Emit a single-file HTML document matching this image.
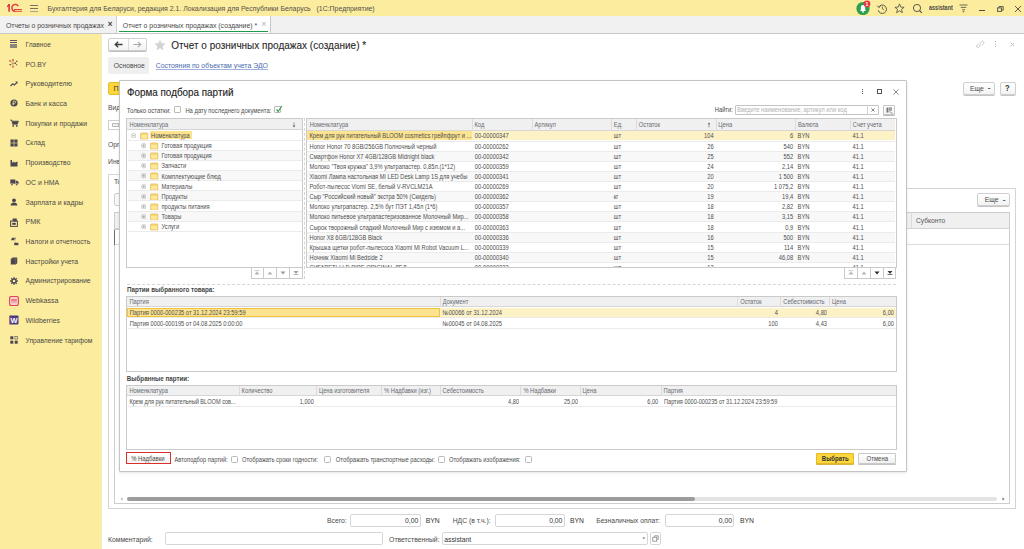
<!DOCTYPE html><html><head><meta charset="utf-8"><style>
html,body{margin:0;padding:0;}
body{width:1024px;height:549px;overflow:hidden;position:relative;background:#fff;font-family:"Liberation Sans",sans-serif;}
.t{position:absolute;white-space:nowrap;}
.r{position:absolute;box-sizing:border-box;}
</style></head><body>
<div class="r" style="left:0.00px;top:0.00px;width:1024.00px;height:16.45px;background:#fbec9e;"></div>
<svg class="r" style="left:0px;top:0px;width:24px;height:16px" viewBox="0 0 24 16"><rect x="8.3" y="4.2" width="1.6" height="7.5" fill="#e0323c"/><path d="M6.8 6.5 L8.4 4.2 L9.9 4.2 L9.9 5.3 L7.3 7.3 Z" fill="#e0323c"/><path d="M18.3 6.2 A3.4 3.4 0 1 0 15.2 11.2" fill="none" stroke="#e0323c" stroke-width="1.3"/><rect x="14" y="9" width="8" height="0.9" fill="#e0323c"/><rect x="14" y="10.8" width="8" height="0.9" fill="#e0323c"/></svg>
<div class="r" style="left:30.00px;top:4.90px;width:7.50px;height:1.00px;background:#7a7262;"></div>
<div class="r" style="left:30.00px;top:7.90px;width:7.50px;height:1.00px;background:#7a7262;"></div>
<div class="r" style="left:30.00px;top:10.50px;width:7.50px;height:1.00px;background:#aaa286;"></div>
<div class="t" style="top:4.40px;font-size:6.95px;line-height:10px;color:#55514a;transform:scaleY(1.12);left:47.50px;">Бухгалтерия для Беларуси, редакция 2.1. Локализация для Республики Беларусь&nbsp;&nbsp;&nbsp;(1С:Предприятие)</div>
<svg class="r" style="left:855px;top:0px;width:18px;height:16px" viewBox="0 0 18 16"><circle cx="8" cy="8.5" r="6.6" fill="#2e9e4f"/><path d="M5 11 L5.8 10 L5.8 7.5 A2.2 2.4 0 0 1 10.2 7.5 L10.2 10 L11 11 Z" fill="#fff"/><circle cx="8" cy="11.8" r="0.9" fill="#fff"/><circle cx="12" cy="3.8" r="3.4" fill="#e03a3e"/><text x="12" y="5.6" text-anchor="middle" font-family="Liberation Sans" font-weight="bold" font-size="5" fill="#fff">1</text></svg>
<svg class="r" style="left:876px;top:3px;width:12px;height:11px" viewBox="0 0 12 11"><path d="M2.6 4.2 A4.2 4.2 0 1 1 2.2 7.2" fill="none" stroke="#4d4a44" stroke-width="0.9"/><path d="M1.2 2.6 L2.8 4.6 L4.6 3.2" fill="none" stroke="#4d4a44" stroke-width="0.8"/><path d="M6.4 3.5 L6.4 5.8 L8 7" fill="none" stroke="#4d4a44" stroke-width="0.8"/></svg>
<svg class="r" style="left:894px;top:3px;width:11px;height:11px" viewBox="0 0 11 11"><path d="M5.5 0.9 L6.8 4.1 L10.1 4.3 L7.5 6.4 L8.4 9.7 L5.5 7.8 L2.6 9.7 L3.5 6.4 L0.9 4.3 L4.2 4.1 Z" fill="none" stroke="#4d4a44" stroke-width="0.8" stroke-linejoin="round"/></svg>
<svg class="r" style="left:912px;top:3px;width:11px;height:11px" viewBox="0 0 11 11"><circle cx="5" cy="5" r="3.6" fill="none" stroke="#4d4a44" stroke-width="0.9"/><path d="M7.6 7.6 L9.8 9.8" stroke="#4d4a44" stroke-width="1.1"/></svg>
<div class="t" style="top:3.40px;font-size:5.5px;line-height:10px;color:#4d4a44;transform:scaleY(1.2);font-weight:bold;left:929.00px;">assistant</div>
<svg class="r" style="left:959px;top:4px;width:9px;height:9px" viewBox="0 0 9 9"><path d="M0.5 1 H8.5 M1.8 3.4 H7.2 M3 5.8 H6" stroke="#4d4a44" stroke-width="0.8"/><path d="M3.3 7.2 L5.7 7.2 L4.5 8.6 Z" fill="#4d4a44"/></svg>
<div class="r" style="left:979.00px;top:10.00px;width:5.50px;height:1.00px;background:#4d4a44;"></div>
<svg class="r" style="left:997px;top:5.5px;width:7px;height:6px" viewBox="0 0 7 6"><rect x="0.6" y="1.9" width="3.8" height="3.5" fill="none" stroke="#4d4a44" stroke-width="0.9"/><path d="M2 1.7 V0.6 H6.2 V4.2 H4.6" fill="none" stroke="#4d4a44" stroke-width="0.9"/></svg>
<svg class="r" style="left:1014px;top:4.5px;width:8px;height:8px" viewBox="0 0 8 8"><path d="M1 1 L7 7 M7 1 L1 7" stroke="#4d4a44" stroke-width="0.9"/></svg>
<div class="r" style="left:0.00px;top:16.45px;width:1024.00px;height:16.55px;background:#f0f1f0;"></div>
<div class="r" style="left:0.00px;top:33.00px;width:1024.00px;height:1.00px;background:#c8c8c8;"></div>
<div class="t" style="top:20.50px;font-size:6.85px;line-height:10px;color:#4a4a4a;transform:scaleY(1.12);left:6.00px;">Отчеты о розничных продажах</div>
<div class="t" style="top:20.30px;font-size:8px;line-height:10px;color:#444;transform:scaleY(1.12);font-weight:bold;left:107.80px;">×</div>
<div class="r" style="left:116.00px;top:16.45px;width:1.00px;height:16.55px;background:#d0d0d0;"></div>
<div class="r" style="left:117.00px;top:16.45px;width:152.80px;height:16.55px;background:#fff;"></div>
<div class="t" style="top:20.50px;font-size:6.9px;line-height:10px;color:#4a4a4a;transform:scaleY(1.12);left:122.80px;">Отчет о розничных продажах (создание) *</div>
<div class="t" style="top:20.30px;font-size:8px;line-height:10px;color:#aaa;transform:scaleY(1.12);left:261.50px;">×</div>
<div class="r" style="left:119.00px;top:30.90px;width:149.20px;height:1.00px;background:#1f9a4a;"></div>
<div class="r" style="left:269.80px;top:16.45px;width:1.00px;height:16.55px;background:#c8c8c8;"></div>
<div class="r" style="left:0.00px;top:34.00px;width:101.20px;height:515.00px;background:#fbec9e;"></div>
<div class="r" style="left:101.20px;top:34.00px;width:0.60px;height:515.00px;background:#f3eccb;"></div>
<div class="t" style="top:39.80px;font-size:6.65px;line-height:10px;color:#4d4a44;transform:scaleY(1.12);left:25.50px;">Главное</div>
<div class="r" style="left:10.10px;top:40.10px;width:6.80px;height:0.90px;background:#5a5560;"></div>
<div class="r" style="left:10.10px;top:42.00px;width:6.80px;height:0.90px;background:#5a5560;"></div>
<div class="r" style="left:10.10px;top:43.70px;width:6.80px;height:4.00px;background:#8c8878;"></div>
<div class="t" style="top:59.52px;font-size:6.9px;line-height:10px;color:#4d4a44;transform:scaleY(1.12);left:25.50px;">РО.BY</div>
<svg class="r" style="left:8.5px;top:59.019999999999996px;width:10px;height:10px" viewBox="0 0 10 10"><path d="M4 4.5 L4 1 M4 4.5 L1 1.8 M4 4.5 L4 7.8 M4 4.5 L1.2 5.8 M4 4.5 L6.2 4.2 L7.8 2.2 M6.2 4.2 L7.6 5.6" fill="none" stroke="#b8905a" stroke-width="0.7"/><circle cx="4" cy="1" r="0.9" fill="#e0504a"/><circle cx="1" cy="1.8" r="0.9" fill="#e0504a"/><circle cx="4" cy="7.8" r="0.9" fill="#e0504a"/><circle cx="1.2" cy="5.8" r="0.8" fill="#5a4a3a"/><circle cx="6.2" cy="4.2" r="0.8" fill="#5a4a3a"/><circle cx="7.8" cy="2.2" r="0.8" fill="#6a5a3a"/><circle cx="7.6" cy="5.8" r="0.8" fill="#8a7a4a"/></svg>
<div class="t" style="top:79.24px;font-size:6.96px;line-height:10px;color:#4d4a44;transform:scaleY(1.12);left:25.50px;">Руководителю</div>
<svg class="r" style="left:10px;top:79.74px;width:8px;height:8px" viewBox="0 0 8 8"><path d="M0.5 6 L2.8 3.8 L4.4 5 L7 2.3" fill="none" stroke="#4b4752" stroke-width="1.1"/><path d="M5.2 1.6 H7.5 V3.9 Z" fill="#4b4752"/></svg>
<div class="t" style="top:98.96px;font-size:7.03px;line-height:10px;color:#4d4a44;transform:scaleY(1.12);left:25.50px;">Банк и касса</div>
<svg class="r" style="left:10px;top:99.46px;width:8px;height:8px" viewBox="0 0 8 8"><circle cx="4" cy="4" r="3.6" fill="#4b4752"/><path d="M3.2 6.2 V2 H4.6 A1.1 1.1 0 0 1 4.6 4.3 H2.6 M2.6 5.2 H4.2" fill="none" stroke="#fbec9e" stroke-width="0.7"/></svg>
<div class="t" style="top:118.68px;font-size:6.96px;line-height:10px;color:#4d4a44;transform:scaleY(1.12);left:25.50px;">Покупки и продажи</div>
<svg class="r" style="left:10px;top:119.17999999999999px;width:9px;height:8px" viewBox="0 0 9 8"><path d="M0.3 1 H1.8 L2.6 5.2 H7.4 L8.3 2.2 H2.2" fill="#4b4752" stroke="#4b4752" stroke-width="0.8"/><circle cx="3.2" cy="6.9" r="0.9" fill="#4b4752"/><circle cx="6.8" cy="6.9" r="0.9" fill="#4b4752"/></svg>
<div class="t" style="top:138.40px;font-size:6.74px;line-height:10px;color:#4d4a44;transform:scaleY(1.12);left:25.50px;">Склад</div>
<svg class="r" style="left:10px;top:138.89999999999998px;width:8px;height:8px" viewBox="0 0 8 8"><rect x="0.5" y="0.5" width="7" height="7" fill="#4b4752"/><path d="M4 0.5 V7.5 M0.5 4 H7.5" stroke="#fbec9e" stroke-width="0.6"/></svg>
<div class="t" style="top:158.12px;font-size:6.92px;line-height:10px;color:#4d4a44;transform:scaleY(1.12);left:25.50px;">Производство</div>
<svg class="r" style="left:10px;top:158.62px;width:8px;height:8px" viewBox="0 0 8 8"><path d="M0.5 7.5 V1 H2 V3.8 L4.3 2.6 V3.8 L7.5 2.6 V7.5 Z" fill="#4b4752"/></svg>
<div class="t" style="top:177.84px;font-size:6.97px;line-height:10px;color:#4d4a44;transform:scaleY(1.12);left:25.50px;">ОС и НМА</div>
<svg class="r" style="left:9.5px;top:178.33999999999997px;width:9px;height:8px" viewBox="0 0 9 8"><rect x="0.3" y="1.5" width="5" height="4.2" fill="#4b4752"/><path d="M5.6 2.8 H7.3 L8.6 4.3 V5.7 H5.6 Z" fill="#4b4752"/><circle cx="2" cy="6.4" r="1" fill="#4b4752" stroke="#fbec9e" stroke-width="0.4"/><circle cx="6.7" cy="6.4" r="1" fill="#4b4752" stroke="#fbec9e" stroke-width="0.4"/></svg>
<div class="t" style="top:197.56px;font-size:6.91px;line-height:10px;color:#4d4a44;transform:scaleY(1.12);left:25.50px;">Зарплата и кадры</div>
<svg class="r" style="left:10px;top:198.06px;width:8px;height:8px" viewBox="0 0 8 8"><circle cx="4" cy="2.3" r="1.9" fill="#4b4752"/><path d="M0.6 7.6 Q0.8 4.6 4 4.6 Q7.2 4.6 7.4 7.6 Z" fill="#4b4752"/></svg>
<div class="t" style="top:217.28px;font-size:7.2px;line-height:10px;color:#4d4a44;transform:scaleY(1.12);left:25.50px;">РМК</div>
<svg class="r" style="left:10px;top:217.77999999999997px;width:8px;height:9px" viewBox="0 0 8 9"><rect x="0.6" y="3" width="6.8" height="5.4" fill="none" stroke="#4b4752" stroke-width="1"/><rect x="2.6" y="0.5" width="4.2" height="3" fill="#4b4752"/><rect x="2.2" y="4.8" width="3.6" height="2" fill="#4b4752"/></svg>
<div class="t" style="top:237.00px;font-size:6.79px;line-height:10px;color:#4d4a44;transform:scaleY(1.12);left:25.50px;">Налоги и отчетность</div>
<svg class="r" style="left:9.5px;top:236.0px;width:9px;height:10px" viewBox="0 0 9 10"><path d="M1 4.2 L2 1.8 H4.8 L3.8 4.2 Z" fill="#4b4752"/><path d="M4.6 4.4 L5.4 1.6" stroke="#4b4752" stroke-width="0.7"/><rect x="4.2" y="6.8" width="4.2" height="2.4" fill="#4b4752"/><path d="M5.6 6.6 V5.8" stroke="#4b4752" stroke-width="0.5"/></svg>
<div class="t" style="top:256.72px;font-size:6.82px;line-height:10px;color:#4d4a44;transform:scaleY(1.12);left:25.50px;">Настройки учета</div>
<svg class="r" style="left:10px;top:257.21999999999997px;width:8px;height:8px" viewBox="0 0 8 8"><path d="M0.8 2 L2.5 0.6 H7.2 V6.2 L5.6 7.6 H0.8 Z" fill="#4b4752"/><path d="M0.8 2 H5.6 V7.6 M5.6 2 L7.2 0.6" fill="none" stroke="#8a8470" stroke-width="0.4"/></svg>
<div class="t" style="top:276.44px;font-size:6.83px;line-height:10px;color:#4d4a44;transform:scaleY(1.12);left:25.50px;">Администрирование</div>
<svg class="r" style="left:9.5px;top:276.74px;width:8px;height:8px" viewBox="0 0 8 8"><path d="M6.60 3.26 L7.84 3.32 L7.84 4.68 L6.60 4.74 L6.36 5.32 L7.20 6.23 L6.23 7.20 L5.32 6.36 L4.74 6.60 L4.68 7.84 L3.32 7.84 L3.26 6.60 L2.68 6.36 L1.77 7.20 L0.80 6.23 L1.64 5.32 L1.40 4.74 L0.16 4.68 L0.16 3.32 L1.40 3.26 L1.64 2.68 L0.80 1.77 L1.77 0.80 L2.68 1.64 L3.26 1.40 L3.32 0.16 L4.68 0.16 L4.74 1.40 L5.32 1.64 L6.23 0.80 L7.20 1.77 L6.36 2.68 Z" fill="#4b4752"/><circle cx="4" cy="4" r="1.3" fill="#fbec9e"/></svg>
<div class="t" style="top:296.16px;font-size:7.1px;line-height:10px;color:#4d4a44;transform:scaleY(1.12);left:25.50px;">Webkassa</div>
<svg class="r" style="left:8.5px;top:295.66px;width:10px;height:10px" viewBox="0 0 10 10"><rect x="0.7" y="0.7" width="8.6" height="8.6" rx="1.2" fill="#fff" stroke="#e2454c" stroke-width="1.3"/><path d="M3 2.4 V7.6 M5 2.4 V7.6 M7 2.4 V7.6 M2.4 4 H7.6" stroke="#e2454c" stroke-width="0.9"/></svg>
<div class="t" style="top:315.88px;font-size:6.9px;line-height:10px;color:#4d4a44;transform:scaleY(1.12);left:25.50px;">Wildberries</div>
<svg class="r" style="left:9px;top:315.38px;width:10px;height:10px" viewBox="0 0 10 10"><rect x="0.5" y="0.5" width="9" height="9" rx="1" fill="#463d86"/><rect x="0.5" y="0.5" width="1" height="9" fill="#b0405a"/><text x="5" y="7.8" text-anchor="middle" font-family="Liberation Sans" font-weight="bold" font-size="7.5" fill="#fff">W</text></svg>
<div class="t" style="top:335.60px;font-size:6.68px;line-height:10px;color:#4d4a44;transform:scaleY(1.12);left:25.50px;">Управление тарифом</div>
<svg class="r" style="left:10px;top:336.09999999999997px;width:8px;height:8px" viewBox="0 0 8 8"><rect x="0.3" y="0.3" width="3" height="3" fill="#4b4752"/><rect x="0.3" y="4.7" width="3" height="3" fill="#4b4752"/><rect x="4.7" y="4.7" width="3" height="3" fill="#4b4752"/><rect x="4.9" y="0.5" width="2.6" height="2.6" fill="none" stroke="#4b4752" stroke-width="0.6"/></svg>
<div class="r" style="left:108.20px;top:38.30px;width:39.30px;height:12.50px;border:1px solid #cfcfcf;border-radius:2px;background:linear-gradient(#fff,#f4f4f4);box-shadow:0 1px 0 #bdbdbd;"></div>
<div class="r" style="left:127.50px;top:38.80px;width:0.80px;height:11.50px;background:#dcdcdc;"></div>
<svg class="r" style="left:114px;top:41px;width:9px;height:7px" viewBox="0 0 9 7"><path d="M8.5 3.5 H2 M4.2 0.8 L1.2 3.5 L4.2 6.2" fill="none" stroke="#3d3a40" stroke-width="1.3"/></svg>
<svg class="r" style="left:133px;top:41px;width:9px;height:7px" viewBox="0 0 9 7"><path d="M0.5 3.5 H7 M4.8 0.8 L7.8 3.5 L4.8 6.2" fill="none" stroke="#a8a8a8" stroke-width="1.1"/></svg>
<svg class="r" style="left:153.5px;top:38.5px;width:12px;height:12px" viewBox="0 0 12 12"><path d="M6 0.5 L7.6 4.3 L11.6 4.6 L8.6 7.3 L9.6 11.3 L6 9.2 L2.4 11.3 L3.4 7.3 L0.4 4.6 L4.4 4.3 Z" fill="#d3d3d3"/></svg>
<div class="t" style="top:38.80px;font-size:10px;line-height:14px;color:#2a2a2a;transform:scaleY(1.12);left:171.20px;-webkit-text-stroke:0.1px #2a2a2a;">Отчет о розничных продажах (создание) *</div>
<svg class="r" style="left:975px;top:39.5px;width:10px;height:9px" viewBox="0 0 10 9"><path d="M4.2 5.6 L6 3.8 M3.6 3.6 L2 5.2 A1.3 1.3 0 0 0 3.9 7.1 L5.4 5.6 M5 3.4 L6.6 1.8 A1.3 1.3 0 0 1 8.5 3.7 L6.9 5.3" fill="none" stroke="#bdbdbd" stroke-width="0.8"/></svg>
<div class="r" style="left:995.20px;top:41.30px;width:1.20px;height:1.20px;background:#b5b5b5;"></div>
<div class="r" style="left:995.20px;top:43.50px;width:1.20px;height:1.20px;background:#b5b5b5;"></div>
<div class="r" style="left:995.20px;top:45.70px;width:1.20px;height:1.20px;background:#b5b5b5;"></div>
<svg class="r" style="left:1010px;top:42.4px;width:4.4px;height:4.4px" viewBox="0 0 4.4 4.4"><path d="M0.5 0.5 L4.5 4.5 M4.5 0.5 L0.5 4.5" stroke="#b5b5b5" stroke-width="0.8"/></svg>
<div class="r" style="left:108.20px;top:56.80px;width:41.00px;height:17.60px;background:#efefef;border-radius:2px;"></div>
<div class="t" style="top:61.30px;font-size:6.75px;line-height:10px;color:#4a4a4a;transform:scaleY(1.12);left:113.80px;">Основное</div>
<div class="t" style="top:61.10px;font-size:6.9px;line-height:10px;color:#4b6cb0;transform:scaleY(1.12);left:155.70px;">Состояния по объектам учета ЭДО</div>
<div class="r" style="left:155.70px;top:68.70px;width:111.90px;height:0.80px;background:#9fb2da;"></div>
<div class="r" style="left:108.00px;top:81.60px;width:18.00px;height:13.60px;background:#fcd63b;border:1px solid #e4bf2a;border-radius:2px;"></div>
<div class="t" style="top:83.90px;font-size:7px;line-height:10px;color:#333;transform:scaleY(1.12);left:113.50px;">П</div>
<div class="r" style="left:962.70px;top:81.70px;width:32.10px;height:13.80px;border:1px solid #cfcfcf;border-radius:2px;background:linear-gradient(#fff,#f3f3f3);box-shadow:0 1px 0 #c4c4c4;"></div>
<div class="t" style="top:84.10px;font-size:6.8px;line-height:10px;color:#4a4a4a;transform:scaleY(1.12);left:970.00px;">Еще</div>
<svg class="r" style="left:988.3px;top:88.3px;width:3px;height:2px" viewBox="0 0 3 2"><rect width="2.4" height="1" fill="#666"/></svg>
<div class="r" style="left:1000.00px;top:81.70px;width:15.80px;height:13.80px;border:1px solid #cfcfcf;border-radius:2px;background:linear-gradient(#fff,#f3f3f3);box-shadow:0 1px 0 #c4c4c4;"></div>
<div class="t" style="top:84.10px;font-size:7.5px;line-height:10px;color:#333;transform:scaleY(1.12);font-weight:bold;left:1005.00px;">?</div>
<div class="t" style="top:102.90px;font-size:6.8px;line-height:10px;color:#4a4a4a;transform:scaleY(1.12);left:108.00px;">Вид</div>
<div class="r" style="left:108.00px;top:120.00px;width:22.00px;height:9.80px;border:1px solid #cfcfcf;background:#fff;"></div>
<div class="r" style="left:112.00px;top:122.50px;width:7.00px;height:4.80px;border:1px solid #bdbdbd;background:#eee;"></div>
<div class="t" style="top:139.50px;font-size:6.8px;line-height:10px;color:#4a4a4a;transform:scaleY(1.12);left:108.00px;">Орг</div>
<div class="t" style="top:157.20px;font-size:6.8px;line-height:10px;color:#4a4a4a;transform:scaleY(1.12);left:108.00px;">Инв</div>
<div class="r" style="left:108.40px;top:173.60px;width:21.60px;height:15.40px;border:1px solid #d4d4d4;border-bottom:none;background:#fff;"></div>
<div class="t" style="top:176.50px;font-size:6.8px;line-height:10px;color:#4a4a4a;transform:scaleY(1.12);left:114.00px;">То</div>
<div class="r" style="left:108.40px;top:188.20px;width:907.30px;height:320.40px;border:1px solid #d4d4d4;"></div>
<div class="r" style="left:108.40px;top:173.60px;width:1.00px;height:15.40px;background:#d4d4d4;"></div>
<div class="r" style="left:114.00px;top:193.40px;width:16.00px;height:12.60px;border:1px solid #cfcfcf;border-radius:2px;background:#f8f8f8;"></div>
<div class="r" style="left:977.40px;top:193.30px;width:32.40px;height:13.10px;border:1px solid #cfcfcf;border-radius:2px;background:linear-gradient(#fff,#f3f3f3);box-shadow:0 1px 0 #c4c4c4;"></div>
<div class="t" style="top:195.30px;font-size:6.8px;line-height:10px;color:#4a4a4a;transform:scaleY(1.12);left:984.80px;">Еще</div>
<svg class="r" style="left:1003.3px;top:199.5px;width:3px;height:2px" viewBox="0 0 3 2"><rect width="2.4" height="1" fill="#666"/></svg>
<div class="r" style="left:114.00px;top:211.50px;width:895.80px;height:292.30px;border:1px solid #cdcdcd;background:#fff;"></div>
<div class="r" style="left:115.00px;top:212.50px;width:893.80px;height:16.40px;background:#f0f0f0;border-bottom:1px solid #d2d2d2;"></div>
<div class="r" style="left:911.00px;top:212.50px;width:1.00px;height:16.40px;background:#dadada;"></div>
<div class="t" style="top:215.90px;font-size:6.7px;line-height:10px;color:#555;transform:scaleY(1.12);left:916.00px;">Субконто</div>
<div class="r" style="left:115.00px;top:228.90px;width:893.80px;height:15.90px;border-bottom:1px solid #dcdcdc;"></div>
<div class="r" style="left:114.00px;top:228.50px;width:1.00px;height:16.90px;background:#6a6a6a;"></div>
<div class="r" style="left:114.00px;top:228.50px;width:6.00px;height:0.80px;background:#c8c8c8;"></div>
<div class="r" style="left:118.80px;top:217.00px;width:1.00px;height:5.20px;background:#666;"></div>
<div class="r" style="left:109.40px;top:188.20px;width:10.10px;height:1.00px;background:#fff;"></div>
<div class="r" style="left:115.00px;top:496.40px;width:893.80px;height:5.20px;background:#fff;"></div>
<div class="r" style="left:126.60px;top:497.00px;width:870.40px;height:4.00px;background:#e3e3e3;border-radius:2px;"></div>
<div class="r" style="left:126.60px;top:497.00px;width:568.40px;height:4.00px;background:#9c9c9c;border-radius:2px;"></div>
<svg class="r" style="left:119.5px;top:497px;width:3px;height:4px" viewBox="0 0 3 4"><path d="M2.5 0.5 L0.5 2 L2.5 3.5 Z" fill="#aaa"/></svg>
<svg class="r" style="left:1002px;top:497px;width:3px;height:4px" viewBox="0 0 3 4"><path d="M0.5 0.5 L2.5 2 L0.5 3.5 Z" fill="#666"/></svg>
<div class="t" style="top:515.60px;font-size:6.8px;line-height:10px;color:#4a4a4a;transform:scaleY(1.12);left:327.00px;">Всего:</div>
<div class="r" style="left:350.40px;top:513.60px;width:70.40px;height:13.20px;border:1px solid #d6d6d6;border-radius:2px;background:#fff;"></div>
<div class="t" style="top:515.90px;font-size:6.8px;line-height:10px;color:#333;transform:scaleY(1.12);right:605.80px;text-align:right;">0,00</div>
<div class="t" style="top:515.80px;font-size:6.8px;line-height:10px;color:#333;transform:scaleY(1.12);left:425.70px;">BYN</div>
<div class="t" style="top:515.60px;font-size:6.8px;line-height:10px;color:#4a4a4a;transform:scaleY(1.12);left:452.70px;">НДС (в т.ч.):</div>
<div class="r" style="left:495.20px;top:513.60px;width:69.80px;height:13.20px;border:1px solid #d6d6d6;border-radius:2px;background:#fff;"></div>
<div class="t" style="top:515.90px;font-size:6.8px;line-height:10px;color:#333;transform:scaleY(1.12);right:461.60px;text-align:right;">0,00</div>
<div class="t" style="top:515.80px;font-size:6.8px;line-height:10px;color:#333;transform:scaleY(1.12);left:570.00px;">BYN</div>
<div class="t" style="top:515.60px;font-size:6.8px;line-height:10px;color:#4a4a4a;transform:scaleY(1.12);left:596.20px;">Безналичных оплат:</div>
<div class="r" style="left:665.00px;top:513.60px;width:69.40px;height:13.20px;border:1px solid #d6d6d6;border-radius:2px;background:#fff;"></div>
<div class="t" style="top:515.90px;font-size:6.8px;line-height:10px;color:#333;transform:scaleY(1.12);right:292.00px;text-align:right;">0,00</div>
<div class="t" style="top:515.80px;font-size:6.8px;line-height:10px;color:#333;transform:scaleY(1.12);left:740.00px;">BYN</div>
<div class="t" style="top:534.50px;font-size:6.8px;line-height:10px;color:#4a4a4a;transform:scaleY(1.12);left:108.00px;">Комментарий:</div>
<div class="r" style="left:164.50px;top:532.20px;width:218.70px;height:12.60px;border:1px solid #d6d6d6;border-radius:2px;background:#fff;"></div>
<div class="t" style="top:534.50px;font-size:6.8px;line-height:10px;color:#4a4a4a;transform:scaleY(1.12);left:389.10px;">Ответственный:</div>
<div class="r" style="left:442.20px;top:532.20px;width:206.30px;height:12.60px;border:1px solid #d6d6d6;border-radius:2px;background:#fff;"></div>
<div class="t" style="top:534.70px;font-size:6.8px;line-height:10px;color:#333;transform:scaleY(1.12);left:444.30px;">assistant</div>
<svg class="r" style="left:641.5px;top:537px;width:4px;height:3px" viewBox="0 0 4 3"><path d="M0.3 0.5 H3.3 L1.8 2.3 Z" fill="#777"/></svg>
<div class="r" style="left:649.60px;top:532.20px;width:11.20px;height:12.60px;border:1px solid #d6d6d6;border-radius:2px;background:#fff;"></div>
<svg class="r" style="left:651.5px;top:534.5px;width:7px;height:7px" viewBox="0 0 7 7"><rect x="0.8" y="2.2" width="4" height="4" fill="none" stroke="#777" stroke-width="0.7"/><path d="M2.6 2 V0.8 H6.2 V4.4 H5" fill="none" stroke="#777" stroke-width="0.7"/></svg>
<div class="r" style="left:119.30px;top:80.00px;width:787.70px;height:392.00px;background:#fff;border:1px solid #c4c4c4;border-radius:1px;box-shadow:0 1px 3px rgba(0,0,0,0.10);"></div>
<div class="t" style="top:85.60px;font-size:9.9px;line-height:14px;color:#222;transform:scaleY(1.12);left:127.00px;-webkit-text-stroke:0.12px #222;">Форма подбора партий</div>
<div class="r" style="left:862.20px;top:89.00px;width:1.20px;height:1.10px;background:#555;"></div>
<div class="r" style="left:862.20px;top:91.00px;width:1.20px;height:1.10px;background:#555;"></div>
<div class="r" style="left:862.20px;top:93.00px;width:1.20px;height:1.10px;background:#555;"></div>
<div class="r" style="left:877.40px;top:89.20px;width:5.00px;height:5.00px;border:0.9px solid #555;"></div>
<svg class="r" style="left:892.8px;top:88.8px;width:6px;height:6px" viewBox="0 0 6 6"><path d="M0.4 0.4 L5.6 5.6 M5.6 0.4 L0.4 5.6" stroke="#555" stroke-width="0.7"/></svg>
<div class="t" style="top:105.90px;font-size:6.1px;line-height:10px;color:#4d4d4d;transform:scaleY(1.2);left:126.80px;">Только остатки:</div>
<div class="r" style="left:173.60px;top:106.30px;width:7.00px;height:7.20px;border:1px solid #b9b9b9;border-radius:1px;background:#fff;"></div>
<div class="t" style="top:105.90px;font-size:5.87px;line-height:10px;color:#4d4d4d;transform:scaleY(1.2);left:185.40px;">На дату последнего документа:</div>
<div class="r" style="left:274.20px;top:106.30px;width:7.00px;height:7.20px;border:1px solid #b9b9b9;border-radius:1px;background:#fff;"></div>
<svg class="r" style="left:274.5px;top:104.8px;width:8px;height:8px" viewBox="0 0 8 8"><path d="M1.6 4.4 L3.2 6.6 L6.8 1" fill="none" stroke="#2d9a45" stroke-width="1.1"/></svg>
<div class="t" style="top:104.90px;font-size:5.75px;line-height:10px;color:#4a4a4a;transform:scaleY(1.2);left:714.80px;">Найти:</div>
<div class="r" style="left:734.80px;top:104.80px;width:143.90px;height:10.00px;border:1px solid #c4c4c4;border-radius:1px;background:#fff;"></div>
<div class="t" style="top:104.90px;font-size:5.82px;line-height:10px;color:#b3b3b3;transform:scaleY(1.2);left:737.00px;">Введите наименование, артикул или код</div>
<div class="r" style="left:867.30px;top:105.00px;width:0.80px;height:9.60px;background:#d0d0d0;"></div>
<svg class="r" style="left:871px;top:107.8px;width:4px;height:4px" viewBox="0 0 4 4"><path d="M0.4 0.4 L3.6 3.6 M3.6 0.4 L0.4 3.6" stroke="#555" stroke-width="0.7"/></svg>
<div class="r" style="left:883.20px;top:104.60px;width:12.20px;height:10.60px;border:1px solid #c4c4c4;border-radius:1px;background:linear-gradient(#fff,#f2f2f2);box-shadow:0 1px 0 #bbb;"></div>
<svg class="r" style="left:886px;top:106.5px;width:7px;height:7px" viewBox="0 0 7 7"><rect x="0.5" y="0.5" width="2" height="5" fill="#777"/><rect x="3" y="0.5" width="3" height="1.2" fill="#777"/><rect x="3" y="2.3" width="3" height="1.2" fill="#777"/><path d="M3.5 4.5 L6.5 6.5" stroke="#777" stroke-width="0.8"/></svg>
<div class="r" style="left:126.30px;top:118.20px;width:176.70px;height:149.40px;border:1px solid #cacaca;background:#fff;"></div>
<div class="r" style="left:127.30px;top:119.20px;width:174.70px;height:11.20px;background:#f0f0f0;border-bottom:1px solid #d6d6d6;"></div>
<div class="t" style="top:119.80px;font-size:5.75px;line-height:10px;color:#666a70;transform:scaleY(1.2);left:129.50px;">Номенклатура</div>
<svg class="r" style="left:292.4px;top:121.6px;width:4px;height:6px" viewBox="0 0 4 6"><path d="M2 0.2 V4.6" stroke="#666" stroke-width="0.6"/><path d="M0.7 3.6 L2 5.4 L3.3 3.6 Z" fill="#666"/></svg>
<div class="r" style="left:127.80px;top:139.70px;width:174.20px;height:1.00px;background:#ebebeb;"></div>
<svg class="r" style="left:131px;top:133.0px;width:5.4px;height:5.4px" viewBox="0 0 5.4 5.4"><circle cx="2.7" cy="2.7" r="2.3" fill="none" stroke="#aaa" stroke-width="0.6"/><path d="M1.3 2.7 H4.1" stroke="#888" stroke-width="0.6"/></svg>
<div class="r" style="left:150.00px;top:131.40px;width:42.00px;height:7.80px;background:#fde38e;"></div>
<svg class="r" style="left:140px;top:132.0px;width:8.5px;height:7.5px" viewBox="0 0 8.5 7.5"><path d="M0.6 7 V1.8 Q0.6 0.9 1.4 0.9 H6.8 Q7.8 0.9 7.8 1.8 V7 Z" fill="#f7d774" stroke="#deb048" stroke-width="0.6"/><rect x="1.2" y="2.9" width="6" height="3.6" fill="#fde79a"/></svg>
<div class="t" style="top:131.10px;font-size:5.75px;line-height:10px;color:#4e4e4e;transform:scaleY(1.2);left:151.00px;">Номенклатура</div>
<div class="r" style="left:127.80px;top:149.82px;width:174.20px;height:1.00px;background:#ebebeb;"></div>
<svg class="r" style="left:140.8px;top:143.12px;width:5.4px;height:5.4px" viewBox="0 0 5.4 5.4"><circle cx="2.7" cy="2.7" r="2.3" fill="none" stroke="#aaa" stroke-width="0.6"/><path d="M1.3 2.7 H4.1 M2.7 1.3 V4.1" stroke="#888" stroke-width="0.6"/></svg>
<svg class="r" style="left:150px;top:142.12px;width:8.5px;height:7.5px" viewBox="0 0 8.5 7.5"><path d="M0.6 7 V1.8 Q0.6 0.9 1.4 0.9 H6.8 Q7.8 0.9 7.8 1.8 V7 Z" fill="#f7d774" stroke="#deb048" stroke-width="0.6"/><rect x="1.2" y="2.9" width="6" height="3.6" fill="#fde79a"/></svg>
<div class="t" style="top:141.22px;font-size:5.75px;line-height:10px;color:#4e4e4e;transform:scaleY(1.2);left:161.50px;">Готовая продукция</div>
<div class="r" style="left:127.80px;top:150.84px;width:174.20px;height:9.10px;background:#f8f8f8;"></div>
<div class="r" style="left:127.80px;top:159.94px;width:174.20px;height:1.00px;background:#ebebeb;"></div>
<svg class="r" style="left:140.8px;top:153.24px;width:5.4px;height:5.4px" viewBox="0 0 5.4 5.4"><circle cx="2.7" cy="2.7" r="2.3" fill="none" stroke="#aaa" stroke-width="0.6"/><path d="M1.3 2.7 H4.1 M2.7 1.3 V4.1" stroke="#888" stroke-width="0.6"/></svg>
<svg class="r" style="left:150px;top:152.24px;width:8.5px;height:7.5px" viewBox="0 0 8.5 7.5"><path d="M0.6 7 V1.8 Q0.6 0.9 1.4 0.9 H6.8 Q7.8 0.9 7.8 1.8 V7 Z" fill="#f7d774" stroke="#deb048" stroke-width="0.6"/><rect x="1.2" y="2.9" width="6" height="3.6" fill="#fde79a"/></svg>
<div class="t" style="top:151.34px;font-size:5.75px;line-height:10px;color:#4e4e4e;transform:scaleY(1.2);left:161.50px;">Готовая продукция</div>
<div class="r" style="left:127.80px;top:170.06px;width:174.20px;height:1.00px;background:#ebebeb;"></div>
<svg class="r" style="left:140.8px;top:163.35999999999999px;width:5.4px;height:5.4px" viewBox="0 0 5.4 5.4"><circle cx="2.7" cy="2.7" r="2.3" fill="none" stroke="#aaa" stroke-width="0.6"/><path d="M1.3 2.7 H4.1 M2.7 1.3 V4.1" stroke="#888" stroke-width="0.6"/></svg>
<svg class="r" style="left:150px;top:162.35999999999999px;width:8.5px;height:7.5px" viewBox="0 0 8.5 7.5"><path d="M0.6 7 V1.8 Q0.6 0.9 1.4 0.9 H6.8 Q7.8 0.9 7.8 1.8 V7 Z" fill="#f7d774" stroke="#deb048" stroke-width="0.6"/><rect x="1.2" y="2.9" width="6" height="3.6" fill="#fde79a"/></svg>
<div class="t" style="top:161.46px;font-size:5.75px;line-height:10px;color:#4e4e4e;transform:scaleY(1.2);left:161.50px;">Запчасти</div>
<div class="r" style="left:127.80px;top:171.08px;width:174.20px;height:9.10px;background:#f8f8f8;"></div>
<div class="r" style="left:127.80px;top:180.18px;width:174.20px;height:1.00px;background:#ebebeb;"></div>
<svg class="r" style="left:140.8px;top:173.48px;width:5.4px;height:5.4px" viewBox="0 0 5.4 5.4"><circle cx="2.7" cy="2.7" r="2.3" fill="none" stroke="#aaa" stroke-width="0.6"/><path d="M1.3 2.7 H4.1 M2.7 1.3 V4.1" stroke="#888" stroke-width="0.6"/></svg>
<svg class="r" style="left:150px;top:172.48px;width:8.5px;height:7.5px" viewBox="0 0 8.5 7.5"><path d="M0.6 7 V1.8 Q0.6 0.9 1.4 0.9 H6.8 Q7.8 0.9 7.8 1.8 V7 Z" fill="#f7d774" stroke="#deb048" stroke-width="0.6"/><rect x="1.2" y="2.9" width="6" height="3.6" fill="#fde79a"/></svg>
<div class="t" style="top:171.58px;font-size:5.75px;line-height:10px;color:#4e4e4e;transform:scaleY(1.2);left:161.50px;">Комплектующие блюд</div>
<div class="r" style="left:127.80px;top:190.30px;width:174.20px;height:1.00px;background:#ebebeb;"></div>
<svg class="r" style="left:140.8px;top:183.6px;width:5.4px;height:5.4px" viewBox="0 0 5.4 5.4"><circle cx="2.7" cy="2.7" r="2.3" fill="none" stroke="#aaa" stroke-width="0.6"/><path d="M1.3 2.7 H4.1 M2.7 1.3 V4.1" stroke="#888" stroke-width="0.6"/></svg>
<svg class="r" style="left:150px;top:182.6px;width:8.5px;height:7.5px" viewBox="0 0 8.5 7.5"><path d="M0.6 7 V1.8 Q0.6 0.9 1.4 0.9 H6.8 Q7.8 0.9 7.8 1.8 V7 Z" fill="#f7d774" stroke="#deb048" stroke-width="0.6"/><rect x="1.2" y="2.9" width="6" height="3.6" fill="#fde79a"/></svg>
<div class="t" style="top:181.70px;font-size:5.75px;line-height:10px;color:#4e4e4e;transform:scaleY(1.2);left:161.50px;">Материалы</div>
<div class="r" style="left:127.80px;top:191.32px;width:174.20px;height:9.10px;background:#f8f8f8;"></div>
<div class="r" style="left:127.80px;top:200.42px;width:174.20px;height:1.00px;background:#ebebeb;"></div>
<svg class="r" style="left:140.8px;top:193.72px;width:5.4px;height:5.4px" viewBox="0 0 5.4 5.4"><circle cx="2.7" cy="2.7" r="2.3" fill="none" stroke="#aaa" stroke-width="0.6"/><path d="M1.3 2.7 H4.1 M2.7 1.3 V4.1" stroke="#888" stroke-width="0.6"/></svg>
<svg class="r" style="left:150px;top:192.72px;width:8.5px;height:7.5px" viewBox="0 0 8.5 7.5"><path d="M0.6 7 V1.8 Q0.6 0.9 1.4 0.9 H6.8 Q7.8 0.9 7.8 1.8 V7 Z" fill="#f7d774" stroke="#deb048" stroke-width="0.6"/><rect x="1.2" y="2.9" width="6" height="3.6" fill="#fde79a"/></svg>
<div class="t" style="top:191.82px;font-size:5.75px;line-height:10px;color:#4e4e4e;transform:scaleY(1.2);left:161.50px;">Продукты</div>
<div class="r" style="left:127.80px;top:210.54px;width:174.20px;height:1.00px;background:#ebebeb;"></div>
<svg class="r" style="left:140.8px;top:203.84px;width:5.4px;height:5.4px" viewBox="0 0 5.4 5.4"><circle cx="2.7" cy="2.7" r="2.3" fill="none" stroke="#aaa" stroke-width="0.6"/><path d="M1.3 2.7 H4.1 M2.7 1.3 V4.1" stroke="#888" stroke-width="0.6"/></svg>
<svg class="r" style="left:150px;top:202.84px;width:8.5px;height:7.5px" viewBox="0 0 8.5 7.5"><path d="M0.6 7 V1.8 Q0.6 0.9 1.4 0.9 H6.8 Q7.8 0.9 7.8 1.8 V7 Z" fill="#f7d774" stroke="#deb048" stroke-width="0.6"/><rect x="1.2" y="2.9" width="6" height="3.6" fill="#fde79a"/></svg>
<div class="t" style="top:201.94px;font-size:5.75px;line-height:10px;color:#4e4e4e;transform:scaleY(1.2);left:161.50px;">продукты питания</div>
<div class="r" style="left:127.80px;top:211.56px;width:174.20px;height:9.10px;background:#f8f8f8;"></div>
<div class="r" style="left:127.80px;top:220.66px;width:174.20px;height:1.00px;background:#ebebeb;"></div>
<svg class="r" style="left:140.8px;top:213.96px;width:5.4px;height:5.4px" viewBox="0 0 5.4 5.4"><circle cx="2.7" cy="2.7" r="2.3" fill="none" stroke="#aaa" stroke-width="0.6"/><path d="M1.3 2.7 H4.1 M2.7 1.3 V4.1" stroke="#888" stroke-width="0.6"/></svg>
<svg class="r" style="left:150px;top:212.96px;width:8.5px;height:7.5px" viewBox="0 0 8.5 7.5"><path d="M0.6 7 V1.8 Q0.6 0.9 1.4 0.9 H6.8 Q7.8 0.9 7.8 1.8 V7 Z" fill="#f7d774" stroke="#deb048" stroke-width="0.6"/><rect x="1.2" y="2.9" width="6" height="3.6" fill="#fde79a"/></svg>
<div class="t" style="top:212.06px;font-size:5.75px;line-height:10px;color:#4e4e4e;transform:scaleY(1.2);left:161.50px;">Товары</div>
<div class="r" style="left:127.80px;top:230.78px;width:174.20px;height:1.00px;background:#ebebeb;"></div>
<svg class="r" style="left:140.8px;top:224.08px;width:5.4px;height:5.4px" viewBox="0 0 5.4 5.4"><circle cx="2.7" cy="2.7" r="2.3" fill="none" stroke="#aaa" stroke-width="0.6"/><path d="M1.3 2.7 H4.1 M2.7 1.3 V4.1" stroke="#888" stroke-width="0.6"/></svg>
<svg class="r" style="left:150px;top:223.08px;width:8.5px;height:7.5px" viewBox="0 0 8.5 7.5"><path d="M0.6 7 V1.8 Q0.6 0.9 1.4 0.9 H6.8 Q7.8 0.9 7.8 1.8 V7 Z" fill="#f7d774" stroke="#deb048" stroke-width="0.6"/><rect x="1.2" y="2.9" width="6" height="3.6" fill="#fde79a"/></svg>
<div class="t" style="top:222.18px;font-size:5.75px;line-height:10px;color:#4e4e4e;transform:scaleY(1.2);left:161.50px;">Услуги</div>
<div class="r" style="left:250.50px;top:267.60px;width:52.50px;height:11.00px;border:1px solid #cacaca;border-top:none;background:#fff;"></div>
<div class="r" style="left:263.12px;top:267.60px;width:1.00px;height:11.00px;background:#cacaca;"></div>
<div class="r" style="left:276.25px;top:267.60px;width:1.00px;height:11.00px;background:#cacaca;"></div>
<div class="r" style="left:289.38px;top:267.60px;width:1.00px;height:11.00px;background:#cacaca;"></div>
<svg class="r" style="left:254.0625px;top:270.0px;width:6px;height:6px" viewBox="0 0 6 6"><rect x="0.5" y="0.4" width="5" height="0.7" fill="#b4b4b4"/><path d="M0.5 4.6 L3 1.4 L5.5 4.6 Z" fill="#b4b4b4"/></svg>
<svg class="r" style="left:267.1875px;top:270.0px;width:6px;height:6px" viewBox="0 0 6 6"><path d="M0.5 4.4 L3 1.4 L5.5 4.4 Z" fill="#b4b4b4"/></svg>
<svg class="r" style="left:280.3125px;top:270.0px;width:6px;height:6px" viewBox="0 0 6 6"><path d="M0.5 1.4 L3 4.4 L5.5 1.4 Z" fill="#9a9a9a"/></svg>
<svg class="r" style="left:293.4375px;top:270.0px;width:6px;height:6px" viewBox="0 0 6 6"><path d="M0.5 1 L3 4 L5.5 1 Z" fill="#a0a0a0"/><rect x="0.5" y="4.2" width="5" height="0.7" fill="#a0a0a0"/></svg>
<div class="r" style="left:304.00px;top:118.00px;width:1.00px;height:161.00px;border-left:1px dashed #d6d6d6;"></div>
<div class="r" style="left:306.40px;top:118.20px;width:590.20px;height:149.40px;border:1px solid #cacaca;background:#fff;"></div>
<div class="r" style="left:307.40px;top:119.00px;width:587.60px;height:11.50px;background:#f0f0f0;border-bottom:1px solid #d6d6d6;"></div>
<div class="t" style="top:119.70px;font-size:5.75px;line-height:10px;color:#666a70;transform:scaleY(1.2);left:309.70px;">Номенклатура</div>
<div class="t" style="top:119.70px;font-size:5.75px;line-height:10px;color:#666a70;transform:scaleY(1.2);left:474.50px;">Код</div>
<div class="r" style="left:471.70px;top:119.00px;width:1.00px;height:11.50px;background:#dcdcdc;"></div>
<div class="t" style="top:119.70px;font-size:5.75px;line-height:10px;color:#666a70;transform:scaleY(1.2);left:534.50px;">Артикул</div>
<div class="r" style="left:531.70px;top:119.00px;width:1.00px;height:11.50px;background:#dcdcdc;"></div>
<div class="t" style="top:119.70px;font-size:5.75px;line-height:10px;color:#666a70;transform:scaleY(1.2);left:613.80px;">Ед.</div>
<div class="r" style="left:611.00px;top:119.00px;width:1.00px;height:11.50px;background:#dcdcdc;"></div>
<div class="t" style="top:119.70px;font-size:5.75px;line-height:10px;color:#666a70;transform:scaleY(1.2);left:638.80px;">Остаток</div>
<div class="r" style="left:636.00px;top:119.00px;width:1.00px;height:11.50px;background:#dcdcdc;"></div>
<div class="t" style="top:119.70px;font-size:5.75px;line-height:10px;color:#666a70;transform:scaleY(1.2);left:718.30px;">Цена</div>
<div class="r" style="left:715.50px;top:119.00px;width:1.00px;height:11.50px;background:#dcdcdc;"></div>
<div class="t" style="top:119.70px;font-size:5.75px;line-height:10px;color:#666a70;transform:scaleY(1.2);left:797.90px;">Валюта</div>
<div class="r" style="left:795.10px;top:119.00px;width:1.00px;height:11.50px;background:#dcdcdc;"></div>
<div class="t" style="top:119.70px;font-size:5.75px;line-height:10px;color:#666a70;transform:scaleY(1.2);left:852.80px;">Счет учета</div>
<div class="r" style="left:850.00px;top:119.00px;width:1.00px;height:11.50px;background:#dcdcdc;"></div>
<svg class="r" style="left:707.2px;top:121.6px;width:4px;height:6px" viewBox="0 0 4 6"><path d="M2 5.4 V1.2" stroke="#666" stroke-width="0.6"/><path d="M0.7 2.2 L2 0.4 L3.3 2.2 Z" fill="#666"/></svg>
<div class="r" style="left:307.4px;top:130.5px;width:587.6px;height:136.1px;overflow:hidden;">
<div class="r" style="left:0.00px;top:0.90px;width:587.60px;height:9.10px;background:#fdf2c6;"></div>
<div class="r" style="left:0.00px;top:0.90px;width:164.80px;height:9.10px;background:#fbe38f;"></div>
<div class="r" style="left:0.00px;top:10.00px;width:587.60px;height:1.00px;background:#ebebeb;"></div>
<div class="t" style="top:0.95px;left:2.10px;font-size:5.75px;line-height:10px;color:#4e4e4e;transform:scaleY(1.2);">Крем для рук питательный BLOOM cosmetics грейпфрут и ...</div>
<div class="t" style="top:0.95px;left:167.40px;font-size:5.75px;line-height:10px;color:#4e4e4e;transform:scaleY(1.2);">00-00000347</div>
<div class="t" style="top:0.95px;left:306.40px;font-size:5.75px;line-height:10px;color:#4e4e4e;transform:scaleY(1.2);">шт</div>
<div class="t" style="top:0.95px;right:181.40px;font-size:5.75px;line-height:10px;color:#4e4e4e;transform:scaleY(1.2);">104</div>
<div class="t" style="top:0.95px;right:101.80px;font-size:5.75px;line-height:10px;color:#4e4e4e;transform:scaleY(1.2);">6</div>
<div class="t" style="top:0.95px;left:490.20px;font-size:5.75px;line-height:10px;color:#4e4e4e;transform:scaleY(1.2);">BYN</div>
<div class="t" style="top:0.95px;left:545.10px;font-size:5.75px;line-height:10px;color:#4e4e4e;transform:scaleY(1.2);">41.1</div>
<div class="r" style="left:0.00px;top:20.12px;width:587.60px;height:1.00px;background:#ebebeb;"></div>
<div class="t" style="top:11.07px;left:2.10px;font-size:5.75px;line-height:10px;color:#4e4e4e;transform:scaleY(1.2);">Honor Honor 70 8GB/256GB Полночный черный</div>
<div class="t" style="top:11.07px;left:167.40px;font-size:5.75px;line-height:10px;color:#4e4e4e;transform:scaleY(1.2);">00-00000262</div>
<div class="t" style="top:11.07px;left:306.40px;font-size:5.75px;line-height:10px;color:#4e4e4e;transform:scaleY(1.2);">шт</div>
<div class="t" style="top:11.07px;right:181.40px;font-size:5.75px;line-height:10px;color:#4e4e4e;transform:scaleY(1.2);">26</div>
<div class="t" style="top:11.07px;right:101.80px;font-size:5.75px;line-height:10px;color:#4e4e4e;transform:scaleY(1.2);">540</div>
<div class="t" style="top:11.07px;left:490.20px;font-size:5.75px;line-height:10px;color:#4e4e4e;transform:scaleY(1.2);">BYN</div>
<div class="t" style="top:11.07px;left:545.10px;font-size:5.75px;line-height:10px;color:#4e4e4e;transform:scaleY(1.2);">41.1</div>
<div class="r" style="left:0.00px;top:21.14px;width:587.60px;height:9.10px;background:#f8f8f8;"></div>
<div class="r" style="left:0.00px;top:30.24px;width:587.60px;height:1.00px;background:#ebebeb;"></div>
<div class="t" style="top:21.19px;left:2.10px;font-size:5.75px;line-height:10px;color:#4e4e4e;transform:scaleY(1.2);">Смартфон Honor X7 4GB/128GB Midnight black</div>
<div class="t" style="top:21.19px;left:167.40px;font-size:5.75px;line-height:10px;color:#4e4e4e;transform:scaleY(1.2);">00-00000342</div>
<div class="t" style="top:21.19px;left:306.40px;font-size:5.75px;line-height:10px;color:#4e4e4e;transform:scaleY(1.2);">шт</div>
<div class="t" style="top:21.19px;right:181.40px;font-size:5.75px;line-height:10px;color:#4e4e4e;transform:scaleY(1.2);">25</div>
<div class="t" style="top:21.19px;right:101.80px;font-size:5.75px;line-height:10px;color:#4e4e4e;transform:scaleY(1.2);">552</div>
<div class="t" style="top:21.19px;left:490.20px;font-size:5.75px;line-height:10px;color:#4e4e4e;transform:scaleY(1.2);">BYN</div>
<div class="t" style="top:21.19px;left:545.10px;font-size:5.75px;line-height:10px;color:#4e4e4e;transform:scaleY(1.2);">41.1</div>
<div class="r" style="left:0.00px;top:40.36px;width:587.60px;height:1.00px;background:#ebebeb;"></div>
<div class="t" style="top:31.31px;left:2.10px;font-size:5.75px;line-height:10px;color:#4e4e4e;transform:scaleY(1.2);">Молоко "Твоя кружка" 3,9% ультрапастер. 0,85л.(1*12)</div>
<div class="t" style="top:31.31px;left:167.40px;font-size:5.75px;line-height:10px;color:#4e4e4e;transform:scaleY(1.2);">00-00000359</div>
<div class="t" style="top:31.31px;left:306.40px;font-size:5.75px;line-height:10px;color:#4e4e4e;transform:scaleY(1.2);">шт</div>
<div class="t" style="top:31.31px;right:181.40px;font-size:5.75px;line-height:10px;color:#4e4e4e;transform:scaleY(1.2);">24</div>
<div class="t" style="top:31.31px;right:101.80px;font-size:5.75px;line-height:10px;color:#4e4e4e;transform:scaleY(1.2);">2,14</div>
<div class="t" style="top:31.31px;left:490.20px;font-size:5.75px;line-height:10px;color:#4e4e4e;transform:scaleY(1.2);">BYN</div>
<div class="t" style="top:31.31px;left:545.10px;font-size:5.75px;line-height:10px;color:#4e4e4e;transform:scaleY(1.2);">41.1</div>
<div class="r" style="left:0.00px;top:41.38px;width:587.60px;height:9.10px;background:#f8f8f8;"></div>
<div class="r" style="left:0.00px;top:50.48px;width:587.60px;height:1.00px;background:#ebebeb;"></div>
<div class="t" style="top:41.43px;left:2.10px;font-size:5.75px;line-height:10px;color:#4e4e4e;transform:scaleY(1.2);">Xiaomi Лампа настольная Mi LED Desk Lamp 1S для учебы</div>
<div class="t" style="top:41.43px;left:167.40px;font-size:5.75px;line-height:10px;color:#4e4e4e;transform:scaleY(1.2);">00-00000341</div>
<div class="t" style="top:41.43px;left:306.40px;font-size:5.75px;line-height:10px;color:#4e4e4e;transform:scaleY(1.2);">шт</div>
<div class="t" style="top:41.43px;right:181.40px;font-size:5.75px;line-height:10px;color:#4e4e4e;transform:scaleY(1.2);">20</div>
<div class="t" style="top:41.43px;right:101.80px;font-size:5.75px;line-height:10px;color:#4e4e4e;transform:scaleY(1.2);">1 500</div>
<div class="t" style="top:41.43px;left:490.20px;font-size:5.75px;line-height:10px;color:#4e4e4e;transform:scaleY(1.2);">BYN</div>
<div class="t" style="top:41.43px;left:545.10px;font-size:5.75px;line-height:10px;color:#4e4e4e;transform:scaleY(1.2);">41.1</div>
<div class="r" style="left:0.00px;top:60.60px;width:587.60px;height:1.00px;background:#ebebeb;"></div>
<div class="t" style="top:51.55px;left:2.10px;font-size:5.75px;line-height:10px;color:#4e4e4e;transform:scaleY(1.2);">Робот-пылесос Viomi SE, белый V-RVCLM21A</div>
<div class="t" style="top:51.55px;left:167.40px;font-size:5.75px;line-height:10px;color:#4e4e4e;transform:scaleY(1.2);">00-00000269</div>
<div class="t" style="top:51.55px;left:306.40px;font-size:5.75px;line-height:10px;color:#4e4e4e;transform:scaleY(1.2);">шт</div>
<div class="t" style="top:51.55px;right:181.40px;font-size:5.75px;line-height:10px;color:#4e4e4e;transform:scaleY(1.2);">20</div>
<div class="t" style="top:51.55px;right:101.80px;font-size:5.75px;line-height:10px;color:#4e4e4e;transform:scaleY(1.2);">1 075,2</div>
<div class="t" style="top:51.55px;left:490.20px;font-size:5.75px;line-height:10px;color:#4e4e4e;transform:scaleY(1.2);">BYN</div>
<div class="t" style="top:51.55px;left:545.10px;font-size:5.75px;line-height:10px;color:#4e4e4e;transform:scaleY(1.2);">41.1</div>
<div class="r" style="left:0.00px;top:61.62px;width:587.60px;height:9.10px;background:#f8f8f8;"></div>
<div class="r" style="left:0.00px;top:70.72px;width:587.60px;height:1.00px;background:#ebebeb;"></div>
<div class="t" style="top:61.67px;left:2.10px;font-size:5.75px;line-height:10px;color:#4e4e4e;transform:scaleY(1.2);">Сыр "Российский новый" экстра 50% (Скидель)</div>
<div class="t" style="top:61.67px;left:167.40px;font-size:5.75px;line-height:10px;color:#4e4e4e;transform:scaleY(1.2);">00-00000362</div>
<div class="t" style="top:61.67px;left:306.40px;font-size:5.75px;line-height:10px;color:#4e4e4e;transform:scaleY(1.2);">кг</div>
<div class="t" style="top:61.67px;right:181.40px;font-size:5.75px;line-height:10px;color:#4e4e4e;transform:scaleY(1.2);">19</div>
<div class="t" style="top:61.67px;right:101.80px;font-size:5.75px;line-height:10px;color:#4e4e4e;transform:scaleY(1.2);">19,4</div>
<div class="t" style="top:61.67px;left:490.20px;font-size:5.75px;line-height:10px;color:#4e4e4e;transform:scaleY(1.2);">BYN</div>
<div class="t" style="top:61.67px;left:545.10px;font-size:5.75px;line-height:10px;color:#4e4e4e;transform:scaleY(1.2);">41.1</div>
<div class="r" style="left:0.00px;top:80.84px;width:587.60px;height:1.00px;background:#ebebeb;"></div>
<div class="t" style="top:71.79px;left:2.10px;font-size:5.75px;line-height:10px;color:#4e4e4e;transform:scaleY(1.2);">Молоко ультрапастер. 2,5% бут ПЭТ 1,45л (1*6)</div>
<div class="t" style="top:71.79px;left:167.40px;font-size:5.75px;line-height:10px;color:#4e4e4e;transform:scaleY(1.2);">00-00000357</div>
<div class="t" style="top:71.79px;left:306.40px;font-size:5.75px;line-height:10px;color:#4e4e4e;transform:scaleY(1.2);">шт</div>
<div class="t" style="top:71.79px;right:181.40px;font-size:5.75px;line-height:10px;color:#4e4e4e;transform:scaleY(1.2);">18</div>
<div class="t" style="top:71.79px;right:101.80px;font-size:5.75px;line-height:10px;color:#4e4e4e;transform:scaleY(1.2);">2,82</div>
<div class="t" style="top:71.79px;left:490.20px;font-size:5.75px;line-height:10px;color:#4e4e4e;transform:scaleY(1.2);">BYN</div>
<div class="t" style="top:71.79px;left:545.10px;font-size:5.75px;line-height:10px;color:#4e4e4e;transform:scaleY(1.2);">41.1</div>
<div class="r" style="left:0.00px;top:81.86px;width:587.60px;height:9.10px;background:#f8f8f8;"></div>
<div class="r" style="left:0.00px;top:90.96px;width:587.60px;height:1.00px;background:#ebebeb;"></div>
<div class="t" style="top:81.91px;left:2.10px;font-size:5.75px;line-height:10px;color:#4e4e4e;transform:scaleY(1.2);">Молоко питьевое ультрапастеризованное Молочный Мир...</div>
<div class="t" style="top:81.91px;left:167.40px;font-size:5.75px;line-height:10px;color:#4e4e4e;transform:scaleY(1.2);">00-00000358</div>
<div class="t" style="top:81.91px;left:306.40px;font-size:5.75px;line-height:10px;color:#4e4e4e;transform:scaleY(1.2);">шт</div>
<div class="t" style="top:81.91px;right:181.40px;font-size:5.75px;line-height:10px;color:#4e4e4e;transform:scaleY(1.2);">18</div>
<div class="t" style="top:81.91px;right:101.80px;font-size:5.75px;line-height:10px;color:#4e4e4e;transform:scaleY(1.2);">3,15</div>
<div class="t" style="top:81.91px;left:490.20px;font-size:5.75px;line-height:10px;color:#4e4e4e;transform:scaleY(1.2);">BYN</div>
<div class="t" style="top:81.91px;left:545.10px;font-size:5.75px;line-height:10px;color:#4e4e4e;transform:scaleY(1.2);">41.1</div>
<div class="r" style="left:0.00px;top:101.08px;width:587.60px;height:1.00px;background:#ebebeb;"></div>
<div class="t" style="top:92.03px;left:2.10px;font-size:5.75px;line-height:10px;color:#4e4e4e;transform:scaleY(1.2);">Сырок творожный сладкий Молочный Мир с изюмом и а...</div>
<div class="t" style="top:92.03px;left:167.40px;font-size:5.75px;line-height:10px;color:#4e4e4e;transform:scaleY(1.2);">00-00000363</div>
<div class="t" style="top:92.03px;left:306.40px;font-size:5.75px;line-height:10px;color:#4e4e4e;transform:scaleY(1.2);">шт</div>
<div class="t" style="top:92.03px;right:181.40px;font-size:5.75px;line-height:10px;color:#4e4e4e;transform:scaleY(1.2);">18</div>
<div class="t" style="top:92.03px;right:101.80px;font-size:5.75px;line-height:10px;color:#4e4e4e;transform:scaleY(1.2);">0,9</div>
<div class="t" style="top:92.03px;left:490.20px;font-size:5.75px;line-height:10px;color:#4e4e4e;transform:scaleY(1.2);">BYN</div>
<div class="t" style="top:92.03px;left:545.10px;font-size:5.75px;line-height:10px;color:#4e4e4e;transform:scaleY(1.2);">41.1</div>
<div class="r" style="left:0.00px;top:102.10px;width:587.60px;height:9.10px;background:#f8f8f8;"></div>
<div class="r" style="left:0.00px;top:111.20px;width:587.60px;height:1.00px;background:#ebebeb;"></div>
<div class="t" style="top:102.15px;left:2.10px;font-size:5.75px;line-height:10px;color:#4e4e4e;transform:scaleY(1.2);">Honor X8 6GB/128GB Black</div>
<div class="t" style="top:102.15px;left:167.40px;font-size:5.75px;line-height:10px;color:#4e4e4e;transform:scaleY(1.2);">00-00000336</div>
<div class="t" style="top:102.15px;left:306.40px;font-size:5.75px;line-height:10px;color:#4e4e4e;transform:scaleY(1.2);">шт</div>
<div class="t" style="top:102.15px;right:181.40px;font-size:5.75px;line-height:10px;color:#4e4e4e;transform:scaleY(1.2);">16</div>
<div class="t" style="top:102.15px;right:101.80px;font-size:5.75px;line-height:10px;color:#4e4e4e;transform:scaleY(1.2);">500</div>
<div class="t" style="top:102.15px;left:490.20px;font-size:5.75px;line-height:10px;color:#4e4e4e;transform:scaleY(1.2);">BYN</div>
<div class="t" style="top:102.15px;left:545.10px;font-size:5.75px;line-height:10px;color:#4e4e4e;transform:scaleY(1.2);">41.1</div>
<div class="r" style="left:0.00px;top:121.32px;width:587.60px;height:1.00px;background:#ebebeb;"></div>
<div class="t" style="top:112.27px;left:2.10px;font-size:5.75px;line-height:10px;color:#4e4e4e;transform:scaleY(1.2);">Крышка щетки робот-пылесоса Xiaomi Mi Robot Vacuum L...</div>
<div class="t" style="top:112.27px;left:167.40px;font-size:5.75px;line-height:10px;color:#4e4e4e;transform:scaleY(1.2);">00-00000339</div>
<div class="t" style="top:112.27px;left:306.40px;font-size:5.75px;line-height:10px;color:#4e4e4e;transform:scaleY(1.2);">шт</div>
<div class="t" style="top:112.27px;right:181.40px;font-size:5.75px;line-height:10px;color:#4e4e4e;transform:scaleY(1.2);">15</div>
<div class="t" style="top:112.27px;right:101.80px;font-size:5.75px;line-height:10px;color:#4e4e4e;transform:scaleY(1.2);">114</div>
<div class="t" style="top:112.27px;left:490.20px;font-size:5.75px;line-height:10px;color:#4e4e4e;transform:scaleY(1.2);">BYN</div>
<div class="t" style="top:112.27px;left:545.10px;font-size:5.75px;line-height:10px;color:#4e4e4e;transform:scaleY(1.2);">41.1</div>
<div class="r" style="left:0.00px;top:122.34px;width:587.60px;height:9.10px;background:#f8f8f8;"></div>
<div class="r" style="left:0.00px;top:131.44px;width:587.60px;height:1.00px;background:#ebebeb;"></div>
<div class="t" style="top:122.39px;left:2.10px;font-size:5.75px;line-height:10px;color:#4e4e4e;transform:scaleY(1.2);">Ночник Xiaomi Mi Bedside 2</div>
<div class="t" style="top:122.39px;left:167.40px;font-size:5.75px;line-height:10px;color:#4e4e4e;transform:scaleY(1.2);">00-00000340</div>
<div class="t" style="top:122.39px;left:306.40px;font-size:5.75px;line-height:10px;color:#4e4e4e;transform:scaleY(1.2);">шт</div>
<div class="t" style="top:122.39px;right:181.40px;font-size:5.75px;line-height:10px;color:#4e4e4e;transform:scaleY(1.2);">15</div>
<div class="t" style="top:122.39px;right:101.80px;font-size:5.75px;line-height:10px;color:#4e4e4e;transform:scaleY(1.2);">46,08</div>
<div class="t" style="top:122.39px;left:490.20px;font-size:5.75px;line-height:10px;color:#4e4e4e;transform:scaleY(1.2);">BYN</div>
<div class="t" style="top:122.39px;left:545.10px;font-size:5.75px;line-height:10px;color:#4e4e4e;transform:scaleY(1.2);">41.1</div>
<div class="r" style="left:0.00px;top:141.56px;width:587.60px;height:1.00px;background:#ebebeb;"></div>
<div class="t" style="top:132.51px;left:2.10px;font-size:5.75px;line-height:10px;color:#4e4e4e;transform:scaleY(1.2);">СИГАРЕТЫ LD RIBE ORIGINAL ЛЕД</div>
<div class="t" style="top:132.51px;left:167.40px;font-size:5.75px;line-height:10px;color:#4e4e4e;transform:scaleY(1.2);">00-00000333</div>
<div class="t" style="top:132.51px;left:306.40px;font-size:5.75px;line-height:10px;color:#4e4e4e;transform:scaleY(1.2);">шт</div>
<div class="t" style="top:132.51px;right:181.40px;font-size:5.75px;line-height:10px;color:#4e4e4e;transform:scaleY(1.2);">13</div>
<div class="t" style="top:132.51px;right:101.80px;font-size:5.75px;line-height:10px;color:#4e4e4e;transform:scaleY(1.2);"></div>
<div class="t" style="top:132.51px;left:545.10px;font-size:5.75px;line-height:10px;color:#4e4e4e;transform:scaleY(1.2);">41.1</div>
</div>
<div class="r" style="left:844.40px;top:267.60px;width:51.60px;height:11.00px;border:1px solid #cacaca;border-top:none;background:#fff;"></div>
<div class="r" style="left:856.80px;top:267.60px;width:1.00px;height:11.00px;background:#cacaca;"></div>
<div class="r" style="left:869.70px;top:267.60px;width:1.00px;height:11.00px;background:#cacaca;"></div>
<div class="r" style="left:882.60px;top:267.60px;width:1.00px;height:11.00px;background:#cacaca;"></div>
<svg class="r" style="left:847.85px;top:270.0px;width:6px;height:6px" viewBox="0 0 6 6"><rect x="0.5" y="0.4" width="5" height="0.7" fill="#b8b8b8"/><path d="M0.5 4.6 L3 1.4 L5.5 4.6 Z" fill="#b8b8b8"/></svg>
<svg class="r" style="left:860.75px;top:270.0px;width:6px;height:6px" viewBox="0 0 6 6"><path d="M0.5 4.4 L3 1.4 L5.5 4.4 Z" fill="#b8b8b8"/></svg>
<svg class="r" style="left:873.6500000000001px;top:270.0px;width:6px;height:6px" viewBox="0 0 6 6"><path d="M0.5 1.4 L3 4.4 L5.5 1.4 Z" fill="#2a2a35"/></svg>
<svg class="r" style="left:886.5500000000001px;top:270.0px;width:6px;height:6px" viewBox="0 0 6 6"><path d="M0.5 1 L3 4 L5.5 1 Z" fill="#3a3a45"/><rect x="0.5" y="4.2" width="5" height="0.7" fill="#3a3a45"/></svg>
<div class="r" style="left:127.00px;top:284.20px;width:769.00px;height:1.00px;border-top:1px dashed #d6d6d6;"></div>
<div class="t" style="top:285.40px;font-size:6.25px;line-height:10px;color:#444;transform:scaleY(1.2);font-weight:bold;left:127.00px;">Партии выбранного товара:</div>
<div class="r" style="left:126.30px;top:296.30px;width:770.40px;height:75.30px;border:1px solid #cacaca;background:#fff;"></div>
<div class="r" style="left:127.30px;top:297.30px;width:768.40px;height:10.10px;background:#f0f0f0;border-bottom:1px solid #d6d6d6;"></div>
<div class="t" style="top:297.40px;font-size:5.75px;line-height:10px;color:#666a70;transform:scaleY(1.2);left:129.40px;">Партия</div>
<div class="t" style="top:297.40px;font-size:5.75px;line-height:10px;color:#666a70;transform:scaleY(1.2);left:442.80px;">Документ</div>
<div class="r" style="left:439.70px;top:297.30px;width:1.00px;height:10.10px;background:#dcdcdc;"></div>
<div class="t" style="top:297.40px;font-size:5.75px;line-height:10px;color:#666a70;transform:scaleY(1.2);left:740.20px;">Остаток</div>
<div class="r" style="left:737.10px;top:297.30px;width:1.00px;height:10.10px;background:#dcdcdc;"></div>
<div class="t" style="top:297.40px;font-size:5.75px;line-height:10px;color:#666a70;transform:scaleY(1.2);left:783.30px;">Себестоимость</div>
<div class="r" style="left:780.20px;top:297.30px;width:1.00px;height:10.10px;background:#dcdcdc;"></div>
<div class="t" style="top:297.40px;font-size:5.75px;line-height:10px;color:#666a70;transform:scaleY(1.2);left:832.10px;">Цена</div>
<div class="r" style="left:829.00px;top:297.30px;width:1.00px;height:10.10px;background:#dcdcdc;"></div>
<div class="r" style="left:127.30px;top:307.60px;width:768.40px;height:9.60px;background:#fdf2c6;"></div>
<div class="r" style="left:127.30px;top:307.60px;width:312.70px;height:9.60px;background:#fde38f;border:1px solid #f0c43a;"></div>
<div class="r" style="left:127.80px;top:317.20px;width:767.90px;height:1.00px;background:#ebebeb;"></div>
<div class="r" style="left:127.80px;top:327.80px;width:767.90px;height:0.80px;background:#ebebeb;"></div>
<div class="t" style="top:308.00px;font-size:5.72px;line-height:10px;color:#4e4e4e;transform:scaleY(1.2);left:129.70px;">Партия 0000-000235 от 31.12.2024 23:59:59</div>
<div class="t" style="top:308.00px;font-size:5.72px;line-height:10px;color:#4e4e4e;transform:scaleY(1.2);left:442.50px;">№00066 от 31.12.2024</div>
<div class="t" style="top:308.00px;font-size:5.72px;line-height:10px;color:#4e4e4e;transform:scaleY(1.2);right:246.20px;text-align:right;">4</div>
<div class="t" style="top:308.00px;font-size:5.72px;line-height:10px;color:#4e4e4e;transform:scaleY(1.2);right:197.00px;text-align:right;">4,80</div>
<div class="t" style="top:308.00px;font-size:5.72px;line-height:10px;color:#4e4e4e;transform:scaleY(1.2);right:130.00px;text-align:right;">6,00</div>
<div class="t" style="top:318.80px;font-size:5.72px;line-height:10px;color:#4e4e4e;transform:scaleY(1.2);left:129.70px;">Партия 0000-000195 от 04.08.2025 0:00:00</div>
<div class="t" style="top:318.80px;font-size:5.72px;line-height:10px;color:#4e4e4e;transform:scaleY(1.2);left:442.50px;">№00045 от 04.08.2025</div>
<div class="t" style="top:318.80px;font-size:5.72px;line-height:10px;color:#4e4e4e;transform:scaleY(1.2);right:246.20px;text-align:right;">100</div>
<div class="t" style="top:318.80px;font-size:5.72px;line-height:10px;color:#4e4e4e;transform:scaleY(1.2);right:197.00px;text-align:right;">4,43</div>
<div class="t" style="top:318.80px;font-size:5.72px;line-height:10px;color:#4e4e4e;transform:scaleY(1.2);right:130.00px;text-align:right;">6,00</div>
<div class="t" style="top:373.80px;font-size:6.2px;line-height:10px;color:#444;transform:scaleY(1.2);font-weight:bold;left:126.80px;">Выбранные партии:</div>
<div class="r" style="left:126.30px;top:385.20px;width:770.40px;height:64.60px;border:1px solid #cacaca;background:#fff;"></div>
<div class="r" style="left:127.30px;top:386.20px;width:768.40px;height:10.00px;background:#f0f0f0;border-bottom:1px solid #d6d6d6;"></div>
<div class="t" style="top:386.10px;font-size:5.75px;line-height:10px;color:#666a70;transform:scaleY(1.2);left:129.40px;">Номенклатура</div>
<div class="t" style="top:386.10px;font-size:5.75px;line-height:10px;color:#666a70;transform:scaleY(1.2);left:241.60px;">Количество</div>
<div class="r" style="left:238.50px;top:386.20px;width:1.00px;height:10.00px;background:#dcdcdc;"></div>
<div class="t" style="top:386.10px;font-size:5.75px;line-height:10px;color:#666a70;transform:scaleY(1.2);left:318.90px;">Цена изготовителя</div>
<div class="r" style="left:315.80px;top:386.20px;width:1.00px;height:10.00px;background:#dcdcdc;"></div>
<div class="t" style="top:386.10px;font-size:5.75px;line-height:10px;color:#666a70;transform:scaleY(1.2);left:384.10px;">% Надбавки (изг.)</div>
<div class="r" style="left:381.00px;top:386.20px;width:1.00px;height:10.00px;background:#dcdcdc;"></div>
<div class="t" style="top:386.10px;font-size:5.75px;line-height:10px;color:#666a70;transform:scaleY(1.2);left:442.60px;">Себестоимость</div>
<div class="r" style="left:439.50px;top:386.20px;width:1.00px;height:10.00px;background:#dcdcdc;"></div>
<div class="t" style="top:386.10px;font-size:5.75px;line-height:10px;color:#666a70;transform:scaleY(1.2);left:523.40px;">% Надбавки</div>
<div class="r" style="left:520.30px;top:386.20px;width:1.00px;height:10.00px;background:#dcdcdc;"></div>
<div class="t" style="top:386.10px;font-size:5.75px;line-height:10px;color:#666a70;transform:scaleY(1.2);left:582.60px;">Цена</div>
<div class="r" style="left:579.50px;top:386.20px;width:1.00px;height:10.00px;background:#dcdcdc;"></div>
<div class="t" style="top:386.10px;font-size:5.75px;line-height:10px;color:#666a70;transform:scaleY(1.2);left:663.60px;">Партия</div>
<div class="r" style="left:660.50px;top:386.20px;width:1.00px;height:10.00px;background:#dcdcdc;"></div>
<div class="r" style="left:127.80px;top:405.80px;width:767.90px;height:0.90px;background:#ebebeb;"></div>
<div class="t" style="top:396.90px;font-size:5.6px;line-height:10px;color:#4e4e4e;transform:scaleY(1.2);left:129.50px;">Крем для рук питательный BLOOM сов...</div>
<div class="t" style="top:396.90px;font-size:5.6px;line-height:10px;color:#4e4e4e;transform:scaleY(1.2);right:710.20px;text-align:right;">1,000</div>
<div class="t" style="top:396.90px;font-size:5.6px;line-height:10px;color:#4e4e4e;transform:scaleY(1.2);right:505.00px;text-align:right;">4,80</div>
<div class="t" style="top:396.90px;font-size:5.6px;line-height:10px;color:#4e4e4e;transform:scaleY(1.2);right:446.00px;text-align:right;">25,00</div>
<div class="t" style="top:396.90px;font-size:5.6px;line-height:10px;color:#4e4e4e;transform:scaleY(1.2);right:365.80px;text-align:right;">6,00</div>
<div class="t" style="top:396.90px;font-size:5.6px;line-height:10px;color:#4e4e4e;transform:scaleY(1.2);left:664.00px;">Партия 0000-000235 от 31.12.2024 23:59:59</div>
<div class="r" style="left:126.40px;top:452.30px;width:44.40px;height:12.00px;border:1px solid #d9302c;background:linear-gradient(#fff,#f3f3f3);"></div>
<div class="t" style="top:454.00px;font-size:5.9px;line-height:10px;color:#4a4a4a;transform:scaleY(1.2);left:131.20px;">% Надбавки</div>
<div class="t" style="top:454.80px;font-size:5.76px;line-height:10px;color:#4d4d4d;transform:scaleY(1.2);left:174.50px;">Автоподбор партий:</div>
<div class="r" style="left:231.00px;top:456.00px;width:6.80px;height:6.80px;border:1px solid #b9b9b9;border-radius:1.5px;background:#fff;"></div>
<div class="t" style="top:454.80px;font-size:5.76px;line-height:10px;color:#4d4d4d;transform:scaleY(1.2);left:242.00px;">Отображать сроки годности:</div>
<div class="r" style="left:324.00px;top:456.00px;width:6.80px;height:6.80px;border:1px solid #b9b9b9;border-radius:1.5px;background:#fff;"></div>
<div class="t" style="top:454.80px;font-size:5.85px;line-height:10px;color:#4d4d4d;transform:scaleY(1.2);left:335.80px;">Отображать транспортные расходы:</div>
<div class="r" style="left:438.00px;top:456.00px;width:6.80px;height:6.80px;border:1px solid #b9b9b9;border-radius:1.5px;background:#fff;"></div>
<div class="t" style="top:454.80px;font-size:5.8px;line-height:10px;color:#4d4d4d;transform:scaleY(1.2);left:449.00px;">Отображать изображения:</div>
<div class="r" style="left:524.80px;top:456.00px;width:6.80px;height:6.80px;border:1px solid #b9b9b9;border-radius:1.5px;background:#fff;"></div>
<div class="r" style="left:816.00px;top:453.20px;width:38.00px;height:11.00px;background:#fcd63b;border:1px solid #e2b92a;border-radius:1px;box-shadow:0 1px 0 #d8b43a;"></div>
<div class="t" style="top:453.80px;font-size:6px;line-height:10px;color:#333;transform:scaleY(1.2);font-weight:bold;left:821.80px;">Выбрать</div>
<div class="r" style="left:858.40px;top:453.20px;width:37.80px;height:11.00px;border:1px solid #c9c9c9;border-radius:1px;background:linear-gradient(#fff,#f1f1f1);box-shadow:0 1px 0 #c4c4c4;"></div>
<div class="t" style="top:453.80px;font-size:6px;line-height:10px;color:#4a4a4a;transform:scaleY(1.2);left:866.50px;">Отмена</div>
</body></html>
